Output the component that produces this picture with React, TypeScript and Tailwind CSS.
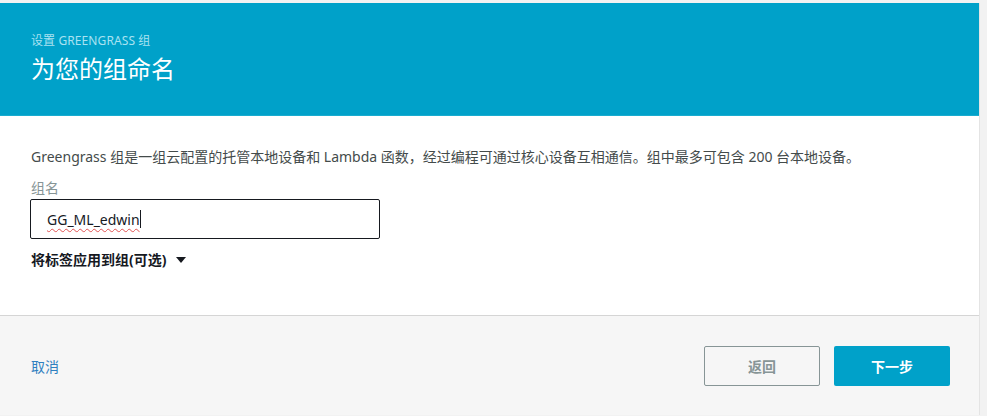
import React from 'react';

const FONT = 'font-["Noto_Sans","Noto_Sans_CJK_SC",sans-serif]';

export default function App() {
  return (
    <div className={`min-h-screen bg-[#f2f2f2] pt-[3px] pr-[7px] ${FONT}`}>
      <div className="bg-white border-r border-[#e4e4e4]">
        <header className="h-[113px] bg-[#00a1c9] border-b border-[#19accf] px-[31px] pt-[29px]">
          <div className="text-[12px] leading-[18px] text-[#a9e2f1] tracking-[0.1px]">设置 GREENGRASS 组</div>
          <h1 className="mt-[3px] text-[24px] leading-[32px] text-white font-normal">为您的组命名</h1>
        </header>

        <section className="px-[31px] pt-[31px] pb-[45px]">
          <p className="text-[14px] leading-[20px] text-[#444b4b]">
            Greengrass 组是一组云配置的托管本地设备和 Lambda 函数，经过编程可通过核心设备互相通信。组中最多可包含 200 台本地设备。
          </p>
          <label className="block mt-[11px] text-[14px] leading-[20px] text-[#879596]">组名</label>
          <div className="mt-[1px] w-[350px] h-[40px] rounded-[2px] border border-[#16191f] flex items-center pl-[16px] -ml-px">
            <span className="text-[14px] text-[#16191f] underline decoration-wavy decoration-[#e05252] decoration-1 underline-offset-[3px]">
              GG_ML_edwin
            </span>
            <span className="w-px h-[18px] bg-[#16191f]" />
          </div>
          <button className="mt-[11px] flex items-center gap-[9px] text-[14px] leading-[20px] font-bold text-[#16191f]">
            将标签应用到组(可选)
            <svg width="10" height="6" viewBox="0 0 10 6">
              <path d="M0 0h10L5 6z" fill="#16191f" />
            </svg>
          </button>
        </section>

        <footer className="h-[100px] bg-[#f6f6f6] border-t border-[#d5d5d5] pl-[30px] pr-[29px] pt-[30px] flex items-start justify-between">
          <a className="h-[40px] flex items-center pl-px text-[14px] text-[#2f80c0] cursor-pointer">取消</a>
          <div className="flex gap-[14px]">
            <button className="w-[116px] h-[40px] rounded-[2px] border border-[#879596] bg-[#f6f6f6] text-[14px] font-bold text-[#879596]">
              返回
            </button>
            <button className="w-[116px] h-[40px] rounded-[2px] bg-[#00a1c9] text-[14px] font-bold text-white">
              下一步
            </button>
          </div>
        </footer>
      </div>
    </div>
  );
}
